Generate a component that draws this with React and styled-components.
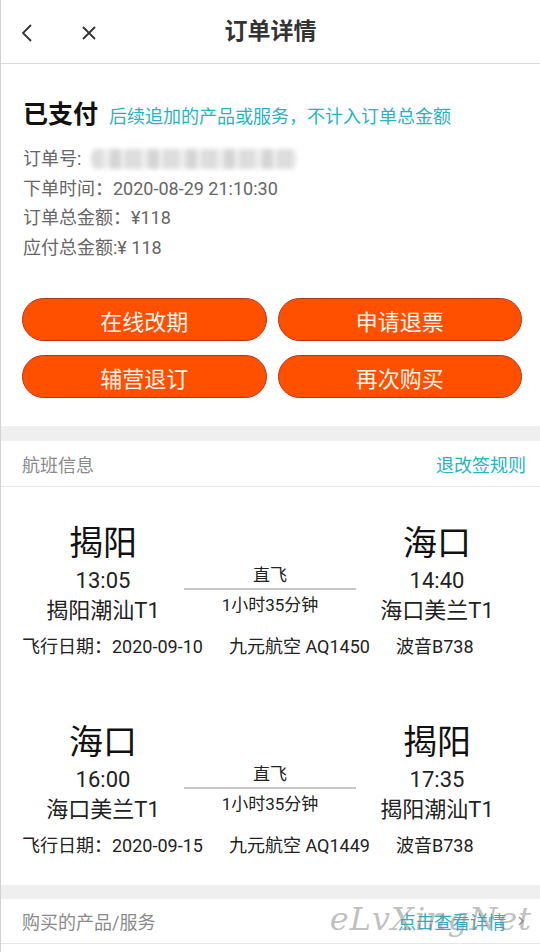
import React from 'react';
import styled, { createGlobalStyle } from 'styled-components';

const GlobalStyle = createGlobalStyle`
  body {
    margin: 0;
    background: #fff;
    font-family: Roboto, "Noto Sans CJK SC", sans-serif;
  }
`;

const flights = [
  {
    from: '揭阳', to: '海口', dep: '13:05', arr: '14:40',
    fromPort: '揭阳潮汕T1', toPort: '海口美兰T1',
    date: '2020-09-10', flightNo: '九元航空 AQ1450', plane: '波音B738'
  },
  {
    from: '海口', to: '揭阳', dep: '16:00', arr: '17:35',
    fromPort: '海口美兰T1', toPort: '揭阳潮汕T1',
    date: '2020-09-15', flightNo: '九元航空 AQ1449', plane: '波音B738'
  }
];

const actions = ['在线改期', '申请退票', '辅营退订', '再次购买'];

export default function App() {
  return (
    <Page>
      <GlobalStyle />
      <Header>
        <NavIcons>
          <svg width="14" height="20" viewBox="0 0 14 20">
            <path d="M11 2 L3 10 L11 18" fill="none" stroke="#333" strokeWidth="1.8" />
          </svg>
          <svg width="16" height="16" viewBox="0 0 16 16">
            <path d="M2 2 L14 14 M14 2 L2 14" fill="none" stroke="#333" strokeWidth="1.8" />
          </svg>
        </NavIcons>
        <Title>订单详情</Title>
        <span />
      </Header>

      <StatusSection>
        <StatusRow>
          <StatusTitle>已支付</StatusTitle>
          <Hint>后续追加的产品或服务，不计入订单总金额</Hint>
        </StatusRow>
        <InfoList>
          <InfoLine>订单号: <Blurred /></InfoLine>
          <InfoLine>下单时间：2020-08-29 21:10:30</InfoLine>
          <InfoLine>订单总金额：¥118</InfoLine>
          <InfoLine>应付总金额:¥ 118</InfoLine>
        </InfoList>
        <ActionGrid>
          {actions.map((a) => (
            <ActionButton key={a}>{a}</ActionButton>
          ))}
        </ActionGrid>
      </StatusSection>

      <Band />
      <SectionHeader>
        <SectionLabel>航班信息</SectionLabel>
        <SectionLink>退改签规则</SectionLink>
      </SectionHeader>

      {flights.map((f) => (
        <Flight key={f.date}>
          <Route>
            <Stop>
              <City>{f.from}</City>
              <Time>{f.dep}</Time>
              <Port>{f.fromPort}</Port>
            </Stop>
            <Middle>
              <MidText>直飞</MidText>
              <MidLine />
              <MidText>1小时35分钟</MidText>
            </Middle>
            <Stop>
              <City>{f.to}</City>
              <Time>{f.arr}</Time>
              <Port>{f.toPort}</Port>
            </Stop>
          </Route>
          <FlightMeta>
            <span>飞行日期：{f.date}</span>
            <span>{f.flightNo}</span>
            <span>{f.plane}</span>
          </FlightMeta>
        </Flight>
      ))}

      <Band $h={14} />
      <SectionHeader $h={45}>
        <SectionLabel>购买的产品/服务</SectionLabel>
        <SectionLink>
          点击查看详情
          <svg width="10" height="14" viewBox="0 0 10 14">
            <path d="M3 3 L7 7 L3 11" fill="none" stroke="#999" strokeWidth="1.5" />
          </svg>
        </SectionLink>
        <Watermark>eLvXingNet</Watermark>
      </SectionHeader>
    </Page>
  );
}

const Page = styled.div`
  min-height: 952px;
  border-left: 1px solid #d2d2d2;
  box-sizing: border-box;
`;

const Header = styled.div`
  height: 64px;
  box-sizing: border-box;
  border-bottom: 1px solid #dcdcdc;
  display: grid;
  grid-template-columns: 1fr auto 1fr;
  align-items: center;
`;

const NavIcons = styled.div`
  display: flex;
  align-items: center;
  gap: 47px;
  padding-left: 19px;
  padding-top: 2px;
`;

const Title = styled.div`
  font-size: 23px;
  font-weight: 700;
  color: #333;
  line-height: 1;
`;

const StatusSection = styled.div`
  padding: 34px 18px 28px 22px;
`;

const StatusRow = styled.div`
  display: flex;
  align-items: baseline;
  gap: 11px;
`;

const StatusTitle = styled.div`
  font-size: 25px;
  font-weight: 700;
  line-height: 34px;
  color: #111;
`;

const Hint = styled.div`
  font-size: 18px;
  color: #2ab2c4;
`;

const InfoList = styled.div`
  margin-top: 12px;
`;

const InfoLine = styled.div`
  font-size: 18px;
  line-height: 29.5px;
  color: #666;
  display: flex;
  align-items: center;
`;

const Blurred = styled.span`
  display: inline-block;
  width: 222px;
  height: 24px;
  margin-left: 2px;
  border-radius: 12px;
  background:
    repeating-linear-gradient(90deg, #ececec 0 4px, #d2d2d2 4px 20px, #e8e8e8 20px 27px, #c8c8c8 27px 38px),
    #f0f0f0;
  background-clip: content-box;
  padding: 2px 8px;
  box-sizing: border-box;
  filter: blur(2px);
  opacity: 0.75;
`;

const ActionGrid = styled.div`
  margin-top: 36px;
  display: grid;
  grid-template-columns: 1fr 1fr;
  gap: 14px 11px;
  margin-left: -1px;
`;

const ActionButton = styled.div`
  height: 43px;
  box-sizing: border-box;
  border-radius: 22px;
  background: #ff5000;
  border: 1.5px solid #b8361b;
  color: #fff6ee;
  font-size: 22px;
  display: flex;
  align-items: center;
  justify-content: center;
`;

const Band = styled.div`
  height: ${(p) => p.$h || 15}px;
  background: #efefef;
`;

const SectionHeader = styled.div`
  position: relative;
  height: ${(p) => p.$h || 46}px;
  box-sizing: border-box;
  border-bottom: 1px solid #e6e6e6;
  display: flex;
  align-items: center;
  justify-content: space-between;
  padding: 0 22px 0 21px;
`;

const SectionLabel = styled.div`
  font-size: 18px;
  color: #8a8a8a;
`;

const SectionLink = styled.div`
  font-size: 18px;
  color: #2ab2c4;
  display: flex;
  align-items: center;
  gap: 10px;
  margin-right: -8px;
`;

const Watermark = styled.div`
  position: absolute;
  right: 8px;
  top: 1px;
  font-family: "DejaVu Serif", serif;
  font-style: italic;
  font-size: 32px;
  letter-spacing: 1px;
  color: rgba(130, 130, 130, 0.5);
  pointer-events: none;
`;

const Flight = styled.div`
  padding: 36px 0 26px 21px;
`;

const Route = styled.div`
  display: grid;
  grid-template-columns: 162px 172px 162px;
`;

const Stop = styled.div`
  display: flex;
  flex-direction: column;
  align-items: center;
  color: #222;
`;

const City = styled.div`
  font-size: 34px;
  line-height: 40px;
  color: #111;
`;

const Time = styled.div`
  font-size: 22px;
  line-height: 30px;
  margin-top: 3px;
`;

const Port = styled.div`
  font-size: 22px;
  line-height: 30px;
`;

const Middle = styled.div`
  padding-top: 40px;
  display: flex;
  flex-direction: column;
  align-items: center;
`;

const MidText = styled.div`
  font-size: 17px;
  line-height: 24px;
  color: #222;
`;

const MidLine = styled.div`
  width: 100%;
  height: 1.5px;
  background: #c8c8c8;
  margin: 1px 0 3px;
`;

const FlightMeta = styled.div`
  margin-top: 8px;
  display: grid;
  grid-template-columns: 207px 167px auto;
  font-size: 18px;
  line-height: 26px;
  color: #222;
`;
